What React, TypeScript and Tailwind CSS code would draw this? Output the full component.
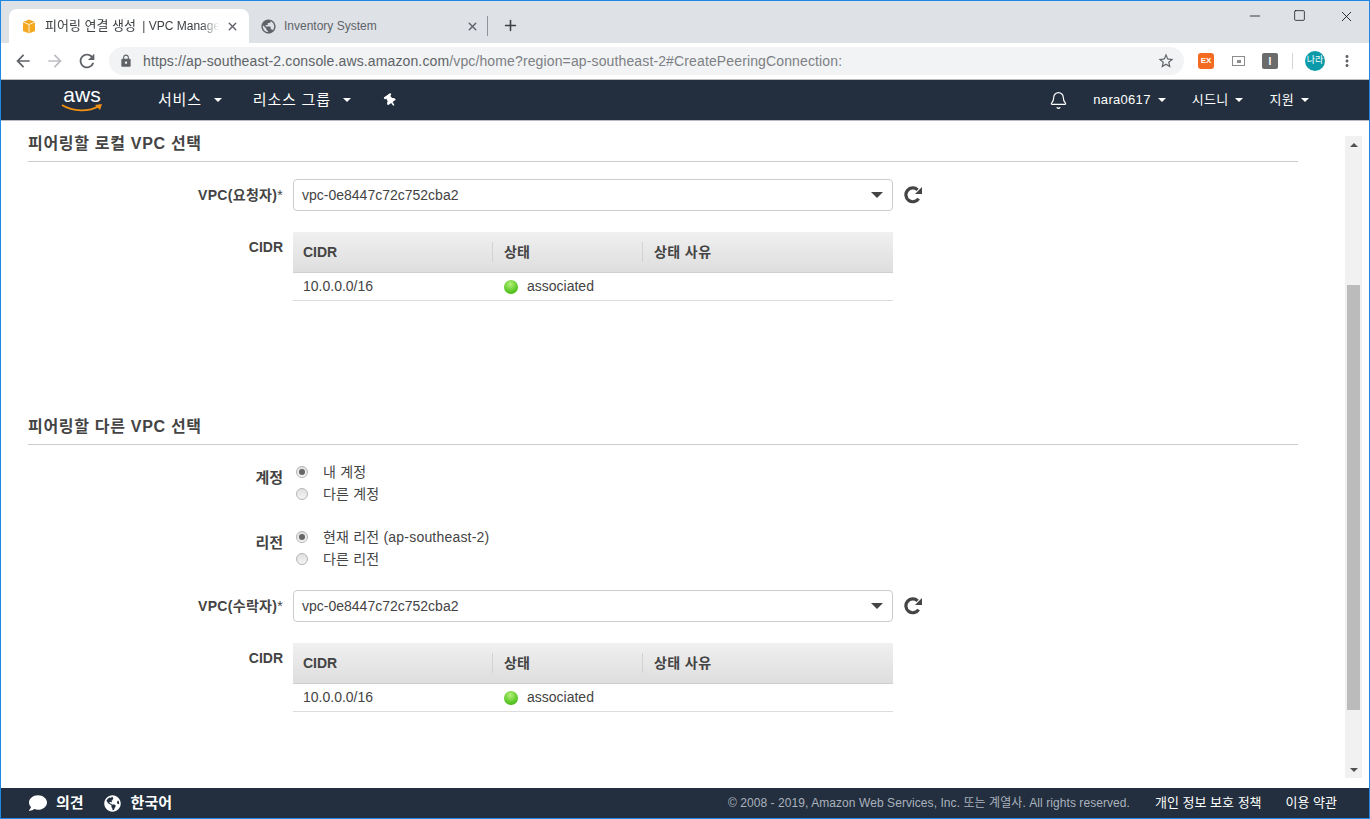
import { FaComment, FaGlobeAmericas, FaThumbtack } from "react-icons/fa";
import { MdArrowBack, MdArrowForward, MdLock, MdMoreVert, MdPublic, MdRefresh, MdStarBorder } from "react-icons/md";
import { Bell, Minus, Plus, Square, X } from "lucide-react";

const sans = "font-['Liberation_Sans','Noto_Sans_CJK_KR',sans-serif]";
const caret = "h-0 w-0 border-x-[4px] border-t-[4px] border-x-transparent border-t-white";

function BoxIcon() {
  return (
    <svg width="14" height="15" viewBox="0 0 14 15">
      <path d="M1 3 L7 0.5 L13 3 L13 12 L7 14.5 L1 12 Z" fill="#f3a81f" />
      <path d="M1 3 L7 5.5 L13 3 M7 5.5 L7 14.5" fill="none" stroke="#fff" strokeWidth="0.8" />
    </svg>
  );
}

function RefreshIcon() {
  return (
    <svg width="18" height="18" viewBox="0 0 18 18" className="ml-[11px] text-[#444444]">
      <path d="M14.6 12.6 A6.9 6.9 0 1 1 13.6 3.9" fill="none" stroke="currentColor" strokeWidth="3.2" />
      <path d="M18 1 L18 8 L11 8 Z" fill="currentColor" />
    </svg>
  );
}

function MainNavItem({ label }: { label: string }) {
  return (
    <div className="flex items-center gap-[12px]">
      <span className="text-[15px] tracking-[0.8px] text-white">{label}</span>
      <span className={caret} />
    </div>
  );
}

function NavItem({ label }: { label: string }) {
  return (
    <div className="flex items-center gap-[7px]">
      <span className="text-[13px] tracking-[0.3px] text-white">{label}</span>
      <span className={caret} />
    </div>
  );
}

function SectionHeading({ title }: { title: string }) {
  return (
    <div className="flex h-[41px] items-center border-b border-[#cccccc] pt-[6px] text-[16px] font-bold tracking-[0.7px] text-[#444444]">
      {title}
    </div>
  );
}

function VpcSelect({ label }: { label: string }) {
  return (
    <div className="flex items-center">
      <div className="w-[256px] pr-[1px] text-right text-[14px] font-bold tracking-[0.3px] text-[#444444]">
        {label}
        <span className="font-normal">*</span>
      </div>
      <div className="ml-[9px] flex h-[32px] w-[600px] items-center justify-between rounded-[4px] border border-[#cccccc] bg-white pl-[8px] pr-[9px] text-[14px] text-[#444444]">
        <span>vpc-0e8447c72c752cba2</span>
        <span className="h-0 w-0 border-x-[6px] border-t-[6px] border-x-transparent border-t-[#444444]" />
      </div>
      <RefreshIcon />
    </div>
  );
}

function CidrTable() {
  return (
    <div className="flex">
      <div className="w-[256px] pt-[5px] pr-[1px] text-right text-[14px] font-bold text-[#444444]">CIDR</div>
      <div className="ml-[9px] w-[600px] text-[14px] text-[#444444]">
        <div className="flex h-[41px] items-center border-b border-[#cfcfcf] bg-gradient-to-b from-[#f0f0f0] to-[#dedede] font-bold">
          <div className="w-[199px] pl-[10px]">CIDR</div>
          <div className="flex h-[20px] w-[150px] items-center border-l border-[#d2d2d2] pl-[11px]">상태</div>
          <div className="flex h-[20px] flex-1 items-center border-l border-[#d2d2d2] pl-[11px] tracking-[0.4px]">상태 사유</div>
        </div>
        <div className="flex h-[28px] items-center border-b border-[#dddddd]">
          <div className="w-[200px] pl-[10px]">10.0.0.0/16</div>
          <div className="flex items-center pl-[11px]">
            <span className="h-[14px] w-[14px] rounded-full bg-[radial-gradient(circle_at_45%_30%,#b4f07a,#55c41f_65%,#3a9a10)]" />
            <span className="ml-[9px]">associated</span>
          </div>
        </div>
      </div>
    </div>
  );
}

function RadioRow({ label, checked }: { label: string; checked?: boolean }) {
  return (
    <div className="flex h-[22px] items-center">
      <span className="flex h-[12px] w-[12px] items-center justify-center rounded-full border border-[#b5b5b5] bg-gradient-to-b from-[#e0e0e0] to-[#f4f4f4]">
        {checked && <span className="h-[6px] w-[6px] rounded-full bg-[#666666]" />}
      </span>
      <span className="ml-[15px] text-[14px] tracking-[0.2px] text-[#444444]">{label}</span>
    </div>
  );
}

function RadioGroup({ label, first, second }: { label: string; first: string; second: string }) {
  return (
    <div className="flex">
      <div className="w-[256px] pt-[6px] pr-[1px] text-right text-[15px] font-bold text-[#444444]">{label}</div>
      <div className="ml-[12px]">
        <RadioRow label={first} checked />
        <RadioRow label={second} />
      </div>
    </div>
  );
}

export default function App() {
  return (
    <div className={`flex h-[819px] w-[1370px] flex-col overflow-hidden border border-[#1e88e5] bg-white ${sans}`}>
      {/* browser tabs */}
      <div className="flex h-[42px] shrink-0 items-end bg-[#dee1e6] pl-[8px]">
        <div className="flex h-[34px] w-[240px] items-center rounded-t-[8px] bg-white pl-[13px] pr-[10px]">
          <BoxIcon />
          <span className="ml-[9px] w-[174px] overflow-hidden whitespace-nowrap text-[12px] text-[#3c4043] [mask-image:linear-gradient(to_right,black_90%,transparent)]">
            <span className="mr-[3px] text-[13px]">피어링 연결 생성</span> | VPC Management
          </span>
          <X size={13} strokeWidth={2.5} className="ml-auto text-[#5f6368]" />
        </div>
        <div className="flex h-[34px] w-[238px] items-center pl-[11px] pr-[8px]">
          <MdPublic size={17} className="text-[#5f6368]" />
          <span className="ml-[7px] text-[12px] text-[#5f6368]">Inventory System</span>
          <X size={13} strokeWidth={2.5} className="ml-auto text-[#5f6368]" />
        </div>
        <div className="mb-[7px] h-[20px] w-px bg-[#8f9399]" />
        <Plus size={17} strokeWidth={2.2} className="mb-[9px] ml-[14px] text-[#3c4043]" />
        <div className="ml-auto flex self-start pt-[7px] text-[#111111]">
          <Minus size={16} strokeWidth={1.2} className="mr-[30px]" />
          <Square size={13} strokeWidth={1.4} className="mr-[32px] mt-[1px]" />
          <X size={17} strokeWidth={1.2} className="mr-[14px]" />
        </div>
      </div>

      {/* browser toolbar */}
      <div className="flex h-[37px] shrink-0 items-center border-b border-[#bdbdbd] bg-white pl-[12px]">
        <MdArrowBack size={20} className="text-[#5f6368]" />
        <MdArrowForward size={20} className="ml-[12px] text-[#bcbec2]" />
        <MdRefresh size={22} className="ml-[11px] text-[#5f6368]" />
        <div className="ml-[11px] flex h-[28px] w-[1075px] items-center rounded-full bg-[#f1f3f4] pl-[10px] pr-[9px]">
          <MdLock size={14} className="text-[#5f6368]" />
          <span className="ml-[10px] text-[14px] tracking-[0.13px] text-[#5f6368]">
            https://ap-southeast-2.console.aws.amazon.com<span className="text-[#7d8084]">/vpc/home?region=ap-southeast-2#CreatePeeringConnection:</span>
          </span>
          <MdStarBorder size={18} className="ml-auto text-[#5f6368]" />
        </div>
        <div className="ml-[14px] flex h-[16px] w-[16px] items-center justify-center rounded-[3px] bg-[#f26b21] text-[8px] font-bold text-white">
          EX
        </div>
        <div className="ml-[18px] flex h-[10px] w-[13px] items-center justify-center border border-[#8c8c8c]">
          <span className="h-[3px] w-[4px] bg-[#8c8c8c]" />
        </div>
        <div className="ml-[17px] flex h-[16px] w-[16px] items-center justify-center rounded-[2px] bg-[#6b6b6b] text-[10px] font-bold text-white">
          I
        </div>
        <div className="ml-[14px] h-[16px] w-px bg-[#d5d5d5]" />
        <div className="ml-[12px] flex h-[20px] w-[20px] items-center justify-center rounded-full bg-[#0b9aa8] text-[9px] text-white">
          나라
        </div>
        <MdMoreVert size={18} className="ml-[13px] text-[#5f6368]" />
      </div>

      {/* console nav */}
      <div className="flex h-[41px] shrink-0 items-center border-b border-[#b8bcc2] bg-[#232f3e] text-white">
        <div className="ml-[60px] flex w-[42px] flex-col items-center leading-none">
          <span className="mt-[-3px] text-[21px] leading-[18px] text-white">aws</span>
          <svg width="42" height="9" viewBox="0 0 42 9" className="mt-[-1px]">
            <path d="M1 2 C12 9 28 9 38 3" fill="none" stroke="#f29111" strokeWidth="1.8" />
            <path d="M34 2 L41 1 L39 7" fill="#f29111" />
          </svg>
        </div>
        <div className="ml-[55px]"><MainNavItem label="서비스" /></div>
        <div className="ml-[31px]"><MainNavItem label="리소스 그룹" /></div>
        <FaThumbtack size={13} className="ml-[33px] rotate-[-35deg]" />
        <Bell size={19} strokeWidth={1.5} className="ml-auto" />
        <div className="ml-[25px]"><NavItem label="nara0617" /></div>
        <div className="ml-[26px]"><NavItem label="시드니" /></div>
        <div className="ml-[26px] mr-[60px]"><NavItem label="지원" /></div>
      </div>

      {/* page body */}
      <div className="flex min-h-0 flex-1">
        <div className="ml-[27px] w-[1270px]">
          <SectionHeading title="피어링할 로컬 VPC 선택" />
          <div className="mt-[17px]"><VpcSelect label="VPC(요청자)" /></div>
          <div className="mt-[21px]"><CidrTable /></div>
          <div className="mt-[103px]"><SectionHeading title="피어링할 다른 VPC 선택" /></div>
          <div className="mt-[16px]"><RadioGroup label="계정" first="내 계정" second="다른 계정" /></div>
          <div className="mt-[21px]"><RadioGroup label="리전" first="현재 리전 (ap-southeast-2)" second="다른 리전" /></div>
          <div className="mt-[20px]"><VpcSelect label="VPC(수락자)" /></div>
          <div className="mt-[21px]"><CidrTable /></div>
        </div>
        <div className="ml-auto mr-[7px] mt-[15px] mb-[10px] flex w-[17px] flex-col bg-[#f1f1f1]">
          <div className="flex h-[17px] items-center justify-center">
            <span className="h-0 w-0 border-x-[4px] border-b-[4px] border-x-transparent border-b-[#505050]" />
          </div>
          <div className="mx-[2px] mt-[132px] h-[425px] bg-[#bbbbbb]" />
          <div className="mt-auto flex h-[17px] items-center justify-center">
            <span className="h-0 w-0 border-x-[4px] border-t-[4px] border-x-transparent border-t-[#505050]" />
          </div>
        </div>
      </div>

      {/* console footer */}
      <div className="flex h-[30px] shrink-0 items-center bg-[#232f3e] text-white">
        <FaComment size={18} className="ml-[28px]" />
        <span className="ml-[9px] text-[15px] font-bold">의견</span>
        <FaGlobeAmericas size={17} className="ml-[20px]" />
        <span className="ml-[10px] text-[15px] font-bold">한국어</span>
        <span className="ml-auto text-[12px] tracking-[0.07px] text-[#aab2bd]">© 2008 - 2019, Amazon Web Services, Inc. 또는 계열사. All rights reserved.</span>
        <span className="ml-[25px] text-[13px]">개인 정보 보호 정책</span>
        <span className="ml-[24px] mr-[32px] text-[13px]">이용 약관</span>
      </div>
    </div>
  );
}
